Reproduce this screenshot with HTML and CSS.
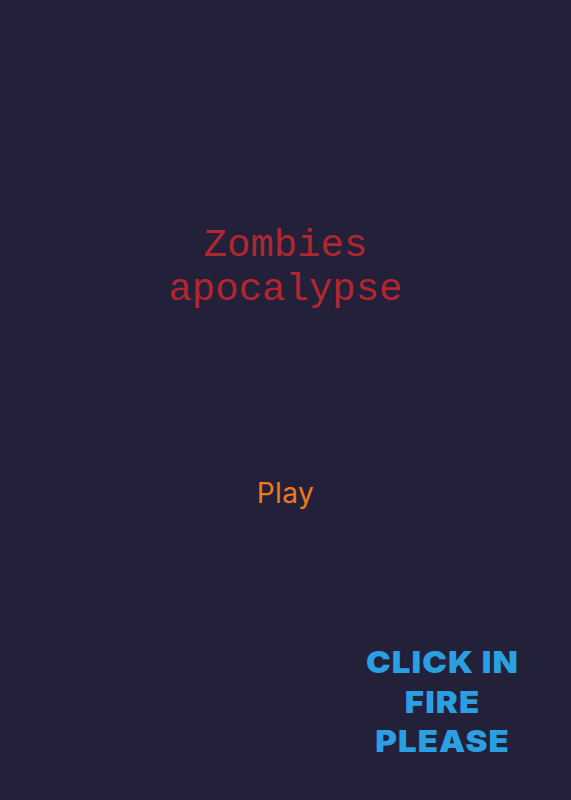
FILE: index.html
```html
<!DOCTYPE html>
<html>
<head>
<meta charset="utf-8">
<link rel="stylesheet" href="styles.css">
</head>
<body>
<main class="screen">
  <h1 class="title">Zombies<br>apocalypse</h1>
  <div class="play">Play</div>
  <div class="hint">CLICK IN<br>FIRE<br>PLEASE</div>
</main>
</body>
</html>
```
FILE: styles.css
```css
html, body {
  margin: 0;
  padding: 0;
  background: #23213a;
}
.screen {
  width: 571px;
  height: 800px;
  display: flex;
  flex-direction: column;
  align-items: center;
  box-sizing: border-box;
  padding-top: 224px;
}
.title {
  margin: 0;
  font-family: "Liberation Mono", monospace;
  font-weight: normal;
  font-size: 39px;
  line-height: 44px;
  color: #b3252f;
  text-align: center;
}
.play {
  margin-top: 165px;
  font-family: Inter, sans-serif;
  font-size: 28px;
  line-height: 32px;
  letter-spacing: 0.5px;
  color: #ee7a1c;
}
.hint {
  align-self: flex-end;
  margin-top: 134px;
  margin-right: 49px;
  width: 160px;
  padding-left: 1px;
  box-sizing: border-box;
  font-family: Inter, sans-serif;
  font-weight: 900;
  font-size: 30px;
  line-height: 39.5px;
  letter-spacing: 1px;
  color: #2aa0e2;
  text-align: center;
  transform: scaleX(1.1);
}
```
